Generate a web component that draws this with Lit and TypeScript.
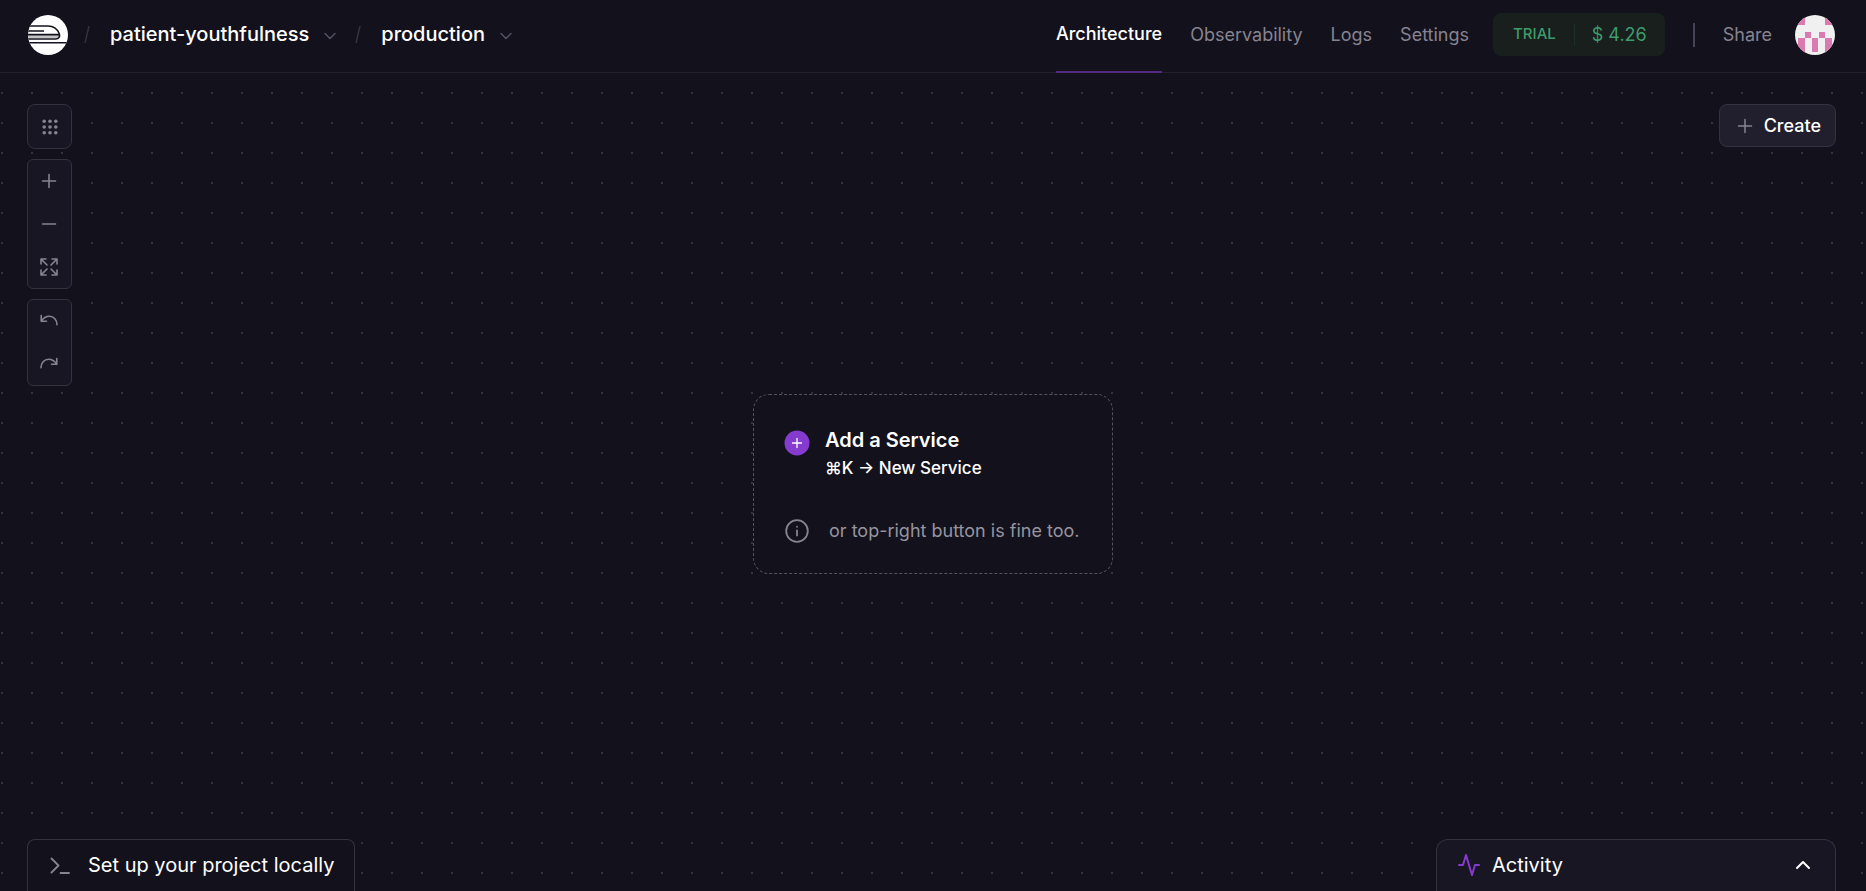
import { LitElement, html, css, svg } from "lit";
import { customElement } from "lit/decorators.js";

const chevron = () => html`
  <svg class="chev" viewBox="0 0 14 14" width="14" height="14" aria-hidden="true"><path d="M2 4.5L7 9.5L12 4.5" /></svg>
`;

@customElement("app-header")
class AppHeader extends LitElement {
  static styles = css`
    :host { display: block; }
    .bar {
      display: flex; align-items: stretch; justify-content: space-between;
      height: 72px; padding: 0 31px 0 28px; border-bottom: 1px solid #22202d; background: #13111c;
    }
    .crumbs, .right { display: flex; align-items: center; padding-bottom: 2px; }
    .logo { display: block; width: 40px; height: 40px; }
    .logo svg { display: block; }
    .slash { width: 8px; height: 18px; margin: 0 19px 0 15px; stroke: #33323e; stroke-width: 1.5; fill: none; }
    .slash.second { margin-left: 17px; }
    .crumb {
      display: flex; align-items: center; gap: 14px; padding: 0 0 2px; border: 0; background: none;
      color: #fff; font: 500 20px/24px Inter, sans-serif;
    }
    .chev { fill: none; stroke: #545260; stroke-width: 1.5; stroke-linecap: round; stroke-linejoin: round; margin-top: 3px; }
    .nav { display: flex; align-self: flex-start; gap: 28px; margin-right: 24px; }
    .link {
      display: flex; align-items: center; box-sizing: border-box; height: 73px; padding-bottom: 1px;
      border-bottom: 2px solid transparent;
      color: #868490; font-size: 18px; line-height: 24px; text-decoration: none;
    }
    .link.active { color: #fff; font-weight: 500; padding-bottom: 3px; border-color: #552982; }
    .trial {
      display: flex; align-items: center; height: 43px; padding: 0 18px 0 20px; border-radius: 8px;
      background: #181f1d; color: #3f9a6c; font-size: 18px; text-decoration: none; margin-bottom: 1px;
    }
    .tag { font-size: 15px; font-weight: 500; padding: 0 18px 2px 0; }
    .amount { padding-left: 17px; line-height: 21px; border-left: 1px solid #1c302a; }
    .rule { width: 2px; height: 24px; background: #454455; margin: 0 28px; }
    .share { border: 0; padding: 0; background: none; color: #868490; font: 18px/24px Inter, sans-serif; margin-right: 23px; }
    .avatar { border: 0; padding: 0; background: none; border-radius: 50%; overflow: hidden; width: 40px; height: 40px; }
    .avatar svg { display: block; }
  `;

  render() {
    return html`
      <header class="bar">
        <div class="crumbs">
          <a class="logo" href="#" aria-label="Home">
            <svg viewBox="0 0 40 40" width="40" height="40">
              <defs><clipPath id="disc"><circle cx="20" cy="20" r="20" /></clipPath></defs>
              <g clip-path="url(#disc)">
                <rect width="40" height="40" fill="#fff" />
                <path d="M0 19.7H31V23H0Z" fill="#c4c4c6" />
                <path d="M0 11H20C26 11 29.5 14.5 31.2 18.5C32.3 21.6 31 24 27.5 24H0M0 16H16M0 19.6H31M0 27.8H40" fill="none" stroke="#13111c" stroke-width="1.6" />
              </g>
            </svg>
          </a>
          <svg class="slash" viewBox="0 0 8 18" aria-hidden="true"><path d="M6 0L2 17" /></svg>
          <button class="crumb">patient-youthfulness ${chevron()}</button>
          <svg class="slash second" viewBox="0 0 8 18" aria-hidden="true"><path d="M6 0L2 17" /></svg>
          <button class="crumb">production ${chevron()}</button>
        </div>
        <div class="right">
          <nav class="nav">
            <a class="link active" href="#">Architecture</a>
            <a class="link" href="#">Observability</a>
            <a class="link" href="#">Logs</a>
            <a class="link" href="#">Settings</a>
          </nav>
          <a class="trial" href="#"><span class="tag">TRIAL</span><span class="amount">$ 4.26</span></a>
          <span class="rule"></span>
          <button class="share">Share</button>
          <button class="avatar" aria-label="Account">
            <svg viewBox="0 0 40 40" width="40" height="40">
              <rect width="40" height="40" fill="#f0f0f0" />
              <path fill="#d97bb1" d="M0 0H10V10H0ZM30 0H40V10H30ZM10 17H16V23H10ZM24 17H30V23H24ZM3 23H10V40H3ZM17 23H23V37H17ZM30 23H37V40H30Z" />
            </svg>
          </button>
        </div>
      </header>
    `;
  }
}

@customElement("canvas-tools")
class CanvasTools extends LitElement {
  static styles = css`
    :host { display: flex; flex-direction: column; gap: 10px; }
    .group { display: flex; flex-direction: column; gap: 1px; width: 43px; border: 1px solid #33323e; border-radius: 6px; background: #181622; }
    .group.single { border-radius: 8px; }
    .tool { display: flex; align-items: center; justify-content: center; height: 42px; border: 0; padding: 0 1px 0 0; background: none; }
    .single .tool { height: 43px; padding: 0; }
    .icon { fill: none; stroke: #868490; stroke-width: 1.6; stroke-linecap: round; stroke-linejoin: round; }
    .dots { fill: #868490; stroke: none; }
  `;

  private tool(label: string, d: string) {
    return html`
      <button class="tool" aria-label=${label}>
        <svg class="icon" viewBox="0 0 20 20" width="20" height="20"><path d=${d} /></svg>
      </button>
    `;
  }

  render() {
    const steps = [4.2, 10, 15.8];
    return html`
      <div class="group single">
        <button class="tool" aria-label="Toggle grid">
          <svg class="dots" viewBox="0 0 20 20" width="20" height="20">
            ${steps.map((y) => steps.map((x) => svg`<circle cx=${x} cy=${y} r="1.8" />`))}
          </svg>
        </button>
      </div>
      <div class="group">
        ${this.tool("Zoom in", "M3.5 10H16.5M10 3.5V16.5")}
        ${this.tool("Zoom out", "M3.5 10H16.5")}
        ${this.tool("Fit view", "M2 7V2H7M2 2L8 8M13 2H18V7M18 2L12 8M2 13V18H7M2 18L8 12M13 18H18V13M18 18L12 12")}
      </div>
      <div class="group">
        ${this.tool("Undo", "M2.2 4.5V10.3H7.5M2.2 10.3C4.5 6.8 7.5 5.3 10.5 5.3C14.5 5.3 17.8 8.5 18 13.8")}
        ${this.tool("Redo", "M17.8 4.5V10.3H12.5M17.8 10.3C15.5 6.8 12.5 5.3 9.5 5.3C5.5 5.3 2.2 8.5 2 13.8")}
      </div>
    `;
  }
}

@customElement("app-root")
class AppRoot extends LitElement {
  static styles = css`
    :host {
      display: flex; flex-direction: column; min-height: 100vh; background: #13111c; color: #fff;
      font-family: Inter, sans-serif;
    }
    .canvas {
      flex: 1; display: grid; grid-template-columns: 1fr auto 1fr; grid-template-rows: auto 1fr auto;
      padding-top: 31px;
      background-image: radial-gradient(circle at 1px 1px, #34323e 1px, transparent 1px);
      background-size: 30px 30px; background-position: 1px 19px;
    }
    .tools { grid-area: 1 / 1 / 3 / 2; justify-self: start; margin-left: 27px; }
    .create {
      grid-area: 1 / 3; justify-self: end; display: flex; align-items: center; gap: 11px;
      height: 43px; margin-right: 30px; padding: 0 14px 0 17px; border: 1px solid #33323e; border-radius: 8px;
      background: #211f2d; color: #fff; font: 500 18px/24px Inter, sans-serif;
    }
    .line { fill: none; stroke: #868490; stroke-width: 1.5; stroke-linecap: round; stroke-linejoin: round; }
    .empty {
      grid-area: 1 / 2 / 4 / 3; align-self: center; box-sizing: border-box; width: 360px; height: 180px;
      display: grid; grid-template-columns: 26px 1fr; align-content: start; column-gap: 15px; padding: 31px 30px;
      margin-bottom: 28px; border: 1px dashed #545260; border-radius: 16px; background: #13111c;
    }
    .title { margin: 0; font-size: 20px; line-height: 28px; font-weight: 600; }
    .keys { margin: 0; font-size: 17px; line-height: 28px; font-weight: 500; }
    .plus { display: block; margin-top: 4px; }
    .info { margin-top: 36px; }
    .hint { margin: 36px 0 0 4px; font-size: 18px; line-height: 26px; color: #96949f; }
    .dock {
      display: flex; align-items: center; box-sizing: border-box; height: 52px;
      border: 1px solid #33323e; border-bottom: 0; color: #fff; font: 20px/24px Inter, sans-serif;
    }
    .local {
      grid-area: 3 / 1; justify-self: start; margin-left: 27px; padding: 0 20px 2px 22px; gap: 18px;
      border-radius: 8px 8px 0 0; background: #13111c;
    }
    .activity {
      grid-area: 3 / 3; justify-self: end; width: 400px; margin-right: 30px; padding: 0 24px 2px 20px; gap: 11px;
      border-radius: 12px 12px 0 0; background: #181622;
    }
    .pulse { stroke: #853bce; stroke-width: 2; }
    .up { margin-left: auto; stroke: #fff; stroke-width: 2; fill: none; stroke-linecap: round; stroke-linejoin: round; }
  `;

  render() {
    return html`
      <app-header></app-header>
      <main class="canvas">
        <canvas-tools class="tools"></canvas-tools>
        <button class="create">
          <svg class="line" viewBox="0 0 16 16" width="16" height="16"><path d="M1.5 8H14.5M8 1.5V14.5" /></svg>
          Create
        </button>
        <section class="empty">
          <svg class="plus" viewBox="0 0 26 26" width="26" height="26">
            <circle cx="13" cy="13" r="12.5" fill="#853bce" />
            <path d="M8.5 13H17.5M13 8.5V17.5" stroke="#fff" stroke-width="1.3" stroke-linecap="round" />
          </svg>
          <div>
            <h2 class="title">Add a Service</h2>
            <p class="keys">⌘K → New Service</p>
          </div>
          <svg class="line info" viewBox="0 0 26 26" width="26" height="26">
            <circle cx="13" cy="13" r="10.8" stroke-width="1.8" /><path d="M13 12.5V17.5M13 8.7V8.8" stroke-width="1.8" />
          </svg>
          <p class="hint">or top-right button is fine too.</p>
        </section>
        <button class="dock local">
          <svg class="line" viewBox="0 0 20 20" width="20" height="20"><path d="M1.5 3.5L8.5 10.5L1.5 17.5M10.5 18H19" stroke-width="1.8" /></svg>
          Set up your project locally
        </button>
        <button class="dock activity">
          <svg class="line pulse" viewBox="0 0 24 24" width="24" height="24"><path d="M2 12H6L9 2L15 22L18 12H22" /></svg>
          Activity
          <svg class="up" viewBox="0 0 16 16" width="16" height="16"><path d="M2 11L8 5L14 11" /></svg>
        </button>
      </main>
    `;
  }
}
